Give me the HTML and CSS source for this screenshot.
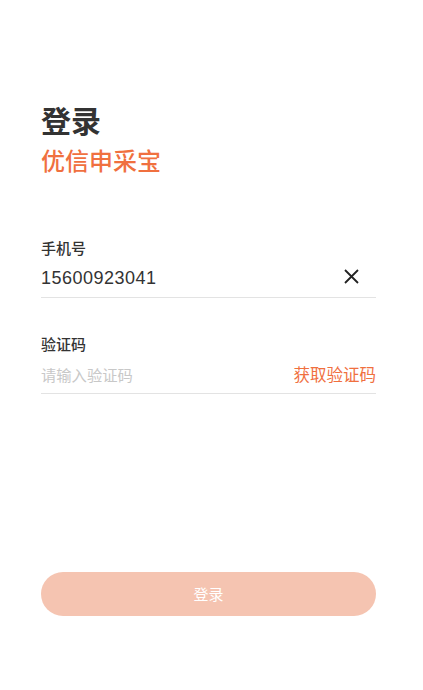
FILE: index.html
```html
<!DOCTYPE html>
<html lang="zh-CN">
<head>
<meta charset="UTF-8">
<meta name="viewport" content="width=device-width, initial-scale=1.0">
<title>登录</title>
<link rel="stylesheet" href="styles.css">
</head>
<body>
    <div class="page">
        <div class="title">登录</div>
        <div class="brand">优信申采宝</div>

        <!-- 手机号 -->
        <div class="field phone">
            <div class="label">手机号</div>
            <div class="row">
                <span class="value">15600923041</span>
                <svg class="clear" width="15" height="15" viewBox="0 0 15 15">
                    <path d="M1 1L14 14M14 1L1 14" stroke="#222" stroke-width="1.8" fill="none"/>
                </svg>
            </div>
        </div>

        <!-- 验证码 -->
        <div class="field code">
            <div class="label">验证码</div>
            <div class="row">
                <span class="placeholder">请输入验证码</span>
                <span class="getcode">获取验证码</span>
            </div>
        </div>

        <div class="loginBtn">登录</div>
    </div>
</body>
</html>
```

FILE: styles.css
```css
body {
    margin: 0;
    background: white;
    font-family: "Noto Sans CJK SC", "Noto Sans", sans-serif;
}

.page {
    padding: 101px 47px 0 41px;
}

.title {
    font-size: 30px;
    font-weight: bold;
    line-height: 36px;
    color: #333;
}

.brand {
    margin-top: 8px;
    font-size: 24px;
    font-weight: 500;
    line-height: 30px;
    color: #f0703f;
}

.field {
    border-bottom: 1px solid #e3e3e3;
}

.phone {
    margin-top: 63px;
    padding-bottom: 6px;
}

.code {
    margin-top: 36px;
    padding-bottom: 6px;
}

.label {
    font-size: 15px;
    font-weight: 500;
    line-height: 20px;
    color: #333;
}

.row {
    display: flex;
    justify-content: space-between;
    align-items: center;
    margin-top: 7px;
    height: 26px;
}

.value {
    font-family: "Liberation Sans", "Noto Sans CJK SC", sans-serif;
    font-size: 18px;
    color: #333;
    letter-spacing: 0.5px;
}

.clear {
    margin-right: 17px;
    margin-bottom: 4px;
}

.placeholder {
    font-size: 15.3px;
    color: #c8c8c8;
}

.getcode {
    font-size: 16.5px;
    color: #f0703f;
}

.loginBtn {
    margin-top: 178px;
    height: 44px;
    line-height: 44px;
    border-radius: 22px;
    background-color: #f5c4b1;
    color: white;
    text-align: center;
    font-size: 15px;
}
```
